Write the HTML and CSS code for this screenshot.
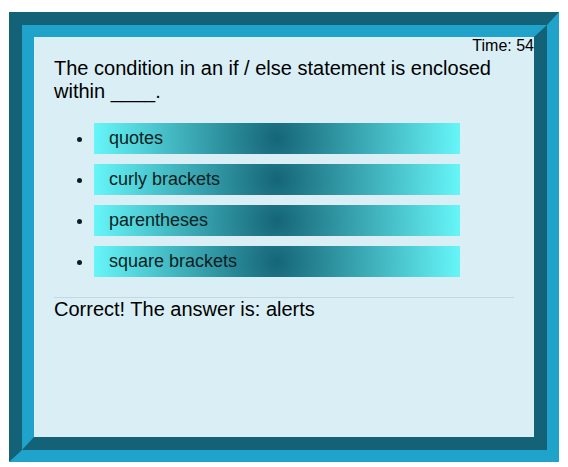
FILE: index.html
```html
<!DOCTYPE html>
<html>
<head>
<meta charset="utf-8">
<link rel="stylesheet" href="styles.css">
</head>
<body>
<div class="frame">
  <div class="frame-inner">
    <div class="quiz">
      <div class="timer">Time: 54</div>
      <p class="question">The condition in an if / else statement is enclosed within ____.</p>
      <ul class="options">
        <li class="option">quotes</li>
        <li class="option">curly brackets</li>
        <li class="option">parentheses</li>
        <li class="option">square brackets</li>
      </ul>
      <hr class="divider">
      <div class="result">Correct! The answer is: alerts</div>
    </div>
  </div>
</div>
</body>
</html>
```
FILE: styles.css
```css
html, body {
  margin: 0;
  padding: 0;
  background: #ffffff;
}
body {
  padding-top: 12px;
  font-family: "Liberation Sans", Arial, sans-serif;
  color: #000;
}
.frame {
  width: 525px;
  margin: 0 auto;
  border-style: solid;
  border-width: 13px 12px 12px 13px;
  border-color: #136277 #1fa3cb #1fa3cb #136277;
}
.frame-inner {
  border-style: solid;
  border-width: 12px 13px 13px 12px;
  border-color: #1fa3cb #136277 #136277 #1fa3cb;
}
.quiz {
  height: 400px;
  background: #d9eff5;
  padding: 0 20px;
  box-sizing: border-box;
}
.timer {
  text-align: right;
  margin-right: -20px;
  font-size: 16px;
  line-height: 18px;
}
.question {
  margin: 2px 0 0;
  font-size: 20px;
  line-height: 23px;
}
.options {
  margin: 20px 0 20px;
  padding-left: 40px;
}
.option {
  width: 366px;
  box-sizing: border-box;
  height: 31px;
  padding: 5px 15px;
  font-size: 18px;
  line-height: 21px;
  color: #0b1e22;
  background: radial-gradient(circle, #156577 0%, #66f6f9 100%);
  margin-bottom: 10px;
}
.option:last-child {
  margin-bottom: 0;
}
.divider {
  margin: 0;
  border: 0;
  border-top: 1px solid #c4d8de;
  height: 0;
}
.result {
  font-size: 20px;
  line-height: 23px;
}
```
